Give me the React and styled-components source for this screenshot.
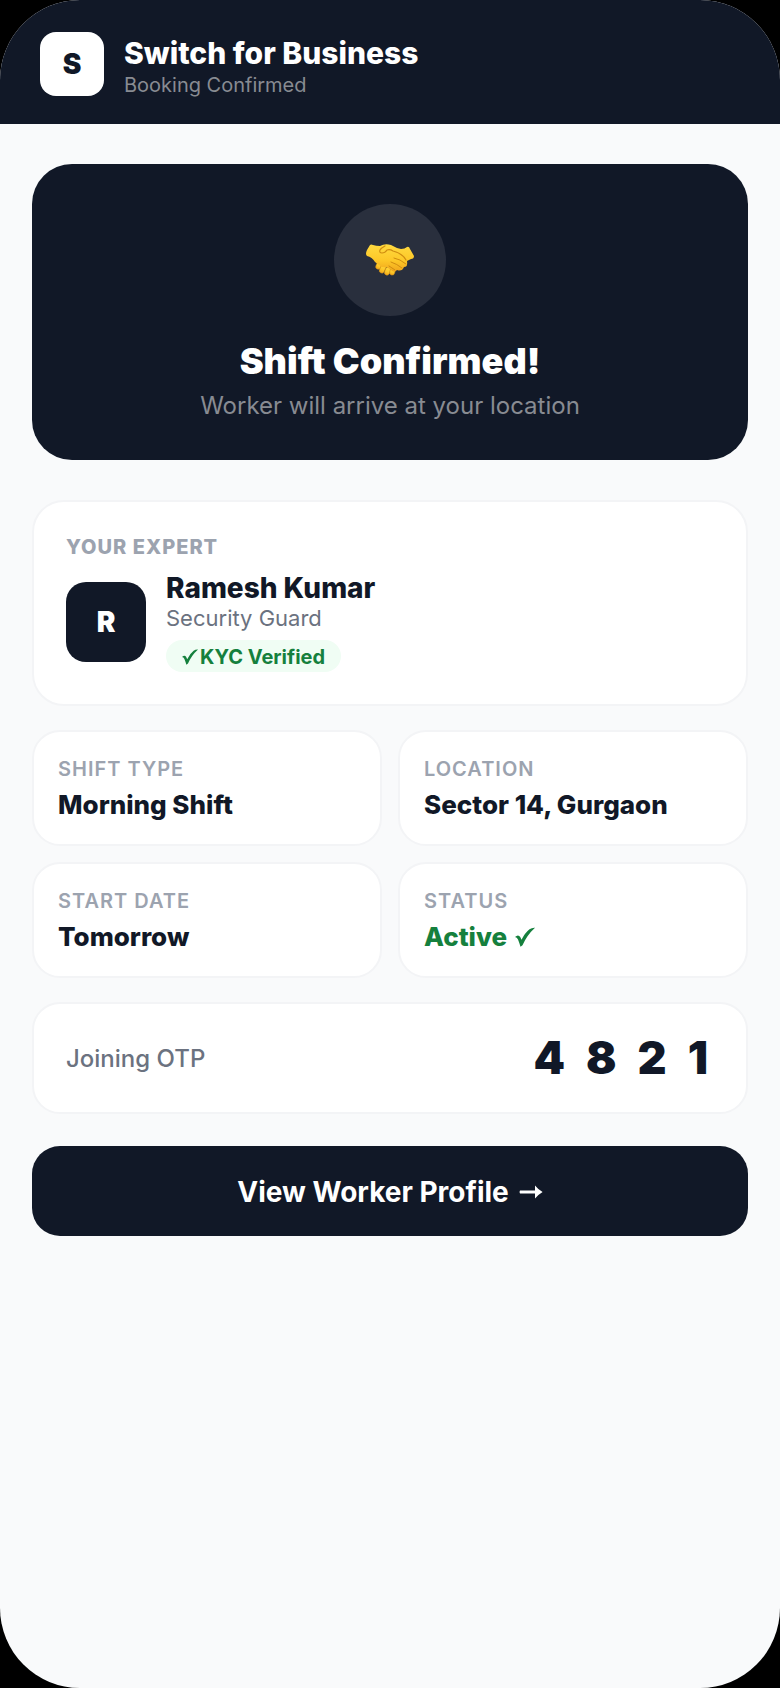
import styled, { createGlobalStyle } from "styled-components";

const GlobalStyle = createGlobalStyle`
  * {
    box-sizing: border-box;
    margin: 0;
    padding: 0;
  }

  body {
    background: #000;
    color: #111827;
    font-family: Inter, "DejaVu Sans", sans-serif;
  }
`;

const Phone = styled.div`
  display: flex;
  flex-direction: column;
  min-height: 100vh;
  background: #f9fafb;
  border-radius: 80px;
  overflow: hidden;
`;

const Header = styled.header`
  display: flex;
  align-items: center;
  gap: 20px;
  padding: 32px 40px 28px;
  background: #111827;
`;

const Tile = styled.div`
  display: flex;
  align-items: center;
  justify-content: center;
  flex-shrink: 0;
  width: ${(props) => props.$size}px;
  height: ${(props) => props.$size}px;
  border-radius: ${(props) => props.$radius}px;
  background: ${(props) => (props.$light ? "#fff" : "#111827")};
  color: ${(props) => (props.$light ? "#111827" : "#fff")};
  font-size: 28px;
  font-weight: 900;
`;

const BrandName = styled.h1`
  color: #fff;
  font-size: 30px;
  font-weight: 800;
  line-height: 42px;
`;

const BrandNote = styled.p`
  color: #888b92;
  font-size: 20px;
  line-height: 22px;
`;

const Content = styled.main`
  display: flex;
  flex-direction: column;
  padding: 40px 32px;
`;

const Hero = styled.section`
  display: flex;
  flex-direction: column;
  align-items: center;
  padding: 40px;
  margin-bottom: 40px;
  border-radius: 40px;
  background: #111827;
  text-align: center;
`;

const HeroIcon = styled.div`
  display: flex;
  align-items: center;
  justify-content: center;
  width: 112px;
  height: 112px;
  margin-bottom: 24px;
  border-radius: 50%;
  background: #292f3d;
`;

const HeroTitle = styled.h2`
  margin-bottom: 10px;
  color: #fff;
  font-size: 36px;
  font-weight: 900;
  line-height: 42px;
`;

const HeroText = styled.p`
  color: #888b92;
  font-size: 24px;
  line-height: 28px;
`;

const Card = styled.section`
  padding: ${(props) => (props.$small ? "24px" : "32px")};
  border: 2px solid #f3f4f6;
  border-radius: ${(props) => (props.$small ? "28px" : "32px")};
  background: #fff;
`;

const Label = styled.h3`
  color: #9ca3af;
  font-size: 20px;
  font-weight: ${(props) => props.$weight || 600};
  line-height: 26px;
  letter-spacing: 1px;
  text-transform: uppercase;
`;

const Expert = styled.div`
  display: flex;
  align-items: center;
  gap: 20px;
  margin-top: 12px;
`;

const ExpertName = styled.p`
  font-size: 28px;
  font-weight: 800;
  line-height: 32px;
`;

const ExpertRole = styled.p`
  color: #6b7280;
  font-size: 22px;
  line-height: 28px;
`;

const Badge = styled.span`
  display: inline-flex;
  align-items: center;
  gap: 2px;
  margin-top: 8px;
  padding: 5px 16px 3px;
  border-radius: 16px;
  background: #f0fdf4;
  color: #15803d;
  font-size: 20px;
  font-weight: 700;
  line-height: 24px;
  vertical-align: top;
`;

const Grid = styled.div`
  display: grid;
  grid-template-columns: 1fr 1fr;
  gap: 16px;
  margin: 24px 0;
`;

const Value = styled.p`
  display: flex;
  align-items: center;
  gap: 8px;
  margin-top: 8px;
  color: ${(props) => (props.$active ? "#15803d" : "#111827")};
  font-size: 26px;
  font-weight: 800;
  line-height: 30px;
`;

const OtpCard = styled(Card)`
  display: flex;
  align-items: center;
  justify-content: space-between;
  padding: 28px 32px;
  border-radius: 28px;
`;

const OtpLabel = styled.span`
  color: #6b7280;
  font-size: 24px;
  font-weight: 500;
`;

const OtpCode = styled.span`
  font-size: 45px;
  font-weight: 900;
  line-height: 52px;
  letter-spacing: 6px;
`;

const Button = styled.button`
  display: flex;
  align-items: center;
  justify-content: center;
  gap: 10px;
  margin-top: 32px;
  padding: 29px 28px 27px;
  border: none;
  border-radius: 28px;
  background: #111827;
  color: #fff;
  font-family: inherit;
  font-size: 28px;
  font-weight: 700;
  line-height: 34px;
  cursor: pointer;
`;

const details = [
  { label: "Shift Type", value: "Morning Shift" },
  { label: "Location", value: "Sector 14, Gurgaon" },
  { label: "Start Date", value: "Tomorrow" },
  { label: "Status", value: "Active", active: true },
];

function Check({ size }) {
  return (
    <svg width={size} height={size} viewBox="0 0 16 16" fill="currentColor" aria-hidden="true">
      <path d="M0 8 Q2.6 5.6 4.2 8 L5.2 10.2 Q8 4.6 11.6 1.8 Q13.6 0.4 16 0.6 Q9.6 6.4 6 14.6 L4.4 15.8 Q3.6 13 2.4 10 Q1.6 8 0 8 Z" />
    </svg>
  );
}

function Arrow() {
  return (
    <svg width="24" height="14" viewBox="0 0 24 14" fill="currentColor" aria-hidden="true">
      <path d="M1 5.6 H16 V0.4 Q19.4 4.6 23.6 7 Q19.4 9.4 16 13.6 V8.4 H1 Q0 7 1 5.6 Z" />
    </svg>
  );
}

function Handshake() {
  return (
    <svg width="48" height="32" viewBox="0 0 48 32" role="img" aria-label="Handshake">
      <defs>
        <linearGradient id="skin" x1="0" y1="0" x2="0" y2="1">
          <stop offset="0" stopColor="#ffda40" />
          <stop offset="0.6" stopColor="#fdc727" />
          <stop offset="1" stopColor="#f0a51c" />
        </linearGradient>
      </defs>
      <g fill="url(#skin)" stroke="#dc9612" strokeWidth="0.5">
        <rect x="10" y="18" width="5" height="7" rx="2.5" transform="rotate(24 12 22)" />
        <rect x="14" y="20" width="5" height="9" rx="2.5" transform="rotate(24 16 25)" />
        <rect x="19" y="23" width="5" height="8" rx="2.5" transform="rotate(18 21 27)" />
        <rect x="24" y="24" width="5" height="7" rx="2.5" transform="rotate(14 26 27)" />
      </g>
      <path
        d="M4 1 Q5 0 7 1 Q10 2 14 2 Q19 -1 25 1 Q30 4 35 5 Q39 5 41 3 Q43 2 44 5 L48 12 Q48 15 45 15 L41 17 Q42 23 38 23 Q36 28 31 26 Q28 30 24 25 L20 23 Q16 24 13 21 L9 18 Q6 13 1 12 Q-1 10 1 6 Z"
        fill="url(#skin)"
      />
      <path
        d="M19 2 Q15 4 14 6 Q13 9 16 9 Q19 9 21 6 Q24 5 27 7 Q36 9 40 16"
        fill="none"
        stroke="#cf8c10"
        strokeWidth="1.2"
        strokeLinecap="round"
      />
      <path
        d="M28 14 Q34 15 40 20 M25 18 Q31 20 36 24 M23 22 L29 26"
        fill="none"
        stroke="#cf8c10"
        strokeWidth="1"
        strokeLinecap="round"
      />
    </svg>
  );
}

function App() {
  return (
    <>
      <GlobalStyle />
      <Phone>
        <Header>
          <Tile $size={64} $radius={16} $light>S</Tile>
          <div>
            <BrandName>Switch for Business</BrandName>
            <BrandNote>Booking Confirmed</BrandNote>
          </div>
        </Header>
        <Content>
          <Hero>
            <HeroIcon>
              <Handshake />
            </HeroIcon>
            <HeroTitle>Shift Confirmed!</HeroTitle>
            <HeroText>Worker will arrive at your location</HeroText>
          </Hero>
          <Card>
            <Label $weight={800}>Your Expert</Label>
            <Expert>
              <Tile $size={80} $radius={20}>R</Tile>
              <div>
                <ExpertName>Ramesh Kumar</ExpertName>
                <ExpertRole>Security Guard</ExpertRole>
                <Badge>
                  <Check size={16} />
                  <span>KYC Verified</span>
                </Badge>
              </div>
            </Expert>
          </Card>
          <Grid>
            {details.map((item) => (
              <Card key={item.label} $small>
                <Label>{item.label}</Label>
                <Value $active={item.active}>
                  {item.value}
                  {item.active && <Check size={20} />}
                </Value>
              </Card>
            ))}
          </Grid>
          <OtpCard>
            <OtpLabel>Joining OTP</OtpLabel>
            <OtpCode>4 8 2 1</OtpCode>
          </OtpCard>
          <Button type="button">
            View Worker Profile
            <Arrow />
          </Button>
        </Content>
      </Phone>
    </>
  );
}

export default App;
